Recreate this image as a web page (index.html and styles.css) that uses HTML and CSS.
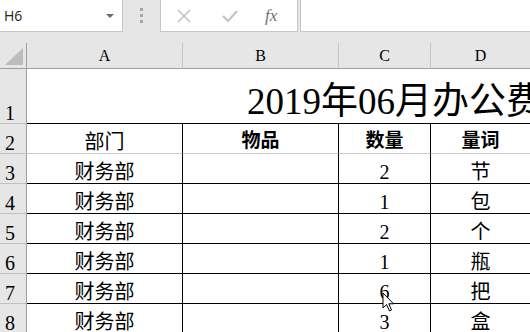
FILE: index.html
```html
<!DOCTYPE html>
<html lang="zh-cn">
	<head>
		<meta http-equiv="Content-Type" content="text/html; charset=utf-8" />
		<title>办公费用</title>
		<link rel="stylesheet" href="styles.css">
	</head>

	<body>
		<div class="toolbar">
			<div class="namebox">
				<span class="ref">H6</span>
				<span class="drop"></span>
			</div>
			<div class="grip">
				<i></i><i></i><i></i>
			</div>
			<div class="fxbox">
				<svg class="ico" width="16" height="16" viewBox="0 0 16 16">
					<path d="M2 2 L14 14 M14 2 L2 14" stroke="#c4c4c4" stroke-width="1.6" fill="none"/>
				</svg>
				<svg class="ico" width="18" height="16" viewBox="0 0 18 16">
					<path d="M2 8 L7 13 L16 3" stroke="#c4c4c4" stroke-width="2.2" fill="none"/>
				</svg>
				<span class="fx">fx</span>
			</div>
			<div class="formula"></div>
		</div>

		<table class="sheet">
			<colgroup>
				<col class="c-rh">
				<col class="c-wide">
				<col class="c-wide">
				<col class="c-num">
				<col class="c-unit">
				<col class="c-unit">
			</colgroup>
			<tr class="hdr">
				<td class="corner"><span class="tri"></span></td>
				<td class="ch">A</td>
				<td class="ch">B</td>
				<td class="ch">C</td>
				<td class="ch">D</td>
				<td class="ch">E</td>
			</tr>
			<tr class="r-title">
				<td class="rh">1</td>
				<td class="title" colspan="5">2019年06月办公费用明细表</td>
			</tr>
			<tr class="r-head">
				<td class="rh">2</td>
				<td class="cell">部门</td>
				<td class="cell bold">物品</td>
				<td class="cell bold">数量</td>
				<td class="cell bold">量词</td>
				<td class="cell"></td>
			</tr>
			<tr>
				<td class="rh">3</td>
				<td class="cell line">财务部</td>
				<td class="cell line"></td>
				<td class="cell line">2</td>
				<td class="cell line">节</td>
				<td class="cell"></td>
			</tr>
			<tr>
				<td class="rh">4</td>
				<td class="cell line">财务部</td>
				<td class="cell line"></td>
				<td class="cell line">1</td>
				<td class="cell line">包</td>
				<td class="cell"></td>
			</tr>
			<tr>
				<td class="rh">5</td>
				<td class="cell line">财务部</td>
				<td class="cell line"></td>
				<td class="cell line">2</td>
				<td class="cell line">个</td>
				<td class="cell"></td>
			</tr>
			<tr>
				<td class="rh">6</td>
				<td class="cell line">财务部</td>
				<td class="cell line"></td>
				<td class="cell line">1</td>
				<td class="cell line">瓶</td>
				<td class="cell"></td>
			</tr>
			<tr>
				<td class="rh">7</td>
				<td class="cell line">财务部</td>
				<td class="cell line"></td>
				<td class="cell line">6</td>
				<td class="cell line">把</td>
				<td class="cell"></td>
			</tr>
			<tr>
				<td class="rh">8</td>
				<td class="cell line">财务部</td>
				<td class="cell line"></td>
				<td class="cell line">3</td>
				<td class="cell line">盒</td>
				<td class="cell"></td>
			</tr>
		</table>

		<!-- 鼠标指针 -->
		<svg class="cursor" width="14" height="21" viewBox="0 0 14 21">
			<path d="M1 1 L1 16 L4.5 12.5 L7.5 19 L9.5 18 L6.8 11.8 L11.5 11.8 Z" fill="#fff" stroke="#000" stroke-width="1"/>
		</svg>
	</body>
</html>
```

FILE: styles.css
```css
*{
	box-sizing: border-box;
}
body{
	margin: 0;
	width: 530px;
	height: 332px;
	overflow: hidden;
	position: relative;
	background: #e6e6e6;
	font-family: "Liberation Serif", "Noto Sans CJK SC", serif;
	color: #000;
}
.toolbar{
	display: flex;
	height: 43px;
	background: #e6e6e6;
}
.namebox{
	width: 123px;
	height: 32px;
	background: #fff;
	border-right: 1px solid #c6c6c6;
	border-bottom: 1px solid #c6c6c6;
	display: flex;
	align-items: center;
	justify-content: space-between;
	padding: 0 8px 0 4px;
}
.namebox .ref{
	font-family: "Open Sans", "Liberation Sans", sans-serif;
	font-size: 14px;
	color: #222;
}
.namebox .drop{
	width: 0;
	height: 0;
	border-left: 4px solid transparent;
	border-right: 4px solid transparent;
	border-top: 4px solid #6b6b6b;
}
.grip{
	width: 37px;
	display: flex;
	flex-direction: column;
	align-items: center;
	padding-top: 8px;
	gap: 3px;
}
.grip i{
	display: block;
	width: 3px;
	height: 3px;
	background: #a6a6a6;
}
.fxbox{
	width: 138px;
	height: 32px;
	background: #fff;
	border-left: 1px solid #c6c6c6;
	border-right: 1px solid #c6c6c6;
	border-bottom: 1px solid #c6c6c6;
	display: flex;
	align-items: center;
	padding-left: 15px;
	gap: 29px;
}
.fx{
	font-family: "Liberation Serif", serif;
	font-style: italic;
	font-size: 17px;
	color: #6e6e6e;
	margin-left: -3px;
}
.formula{
	flex: 1;
	height: 32px;
	margin-left: 2px;
	background: #fff;
	border-left: 1px solid #c6c6c6;
	border-bottom: 1px solid #c6c6c6;
}

.sheet{
	table-layout: fixed;
	width: 631px;
	border-collapse: separate;
	border-spacing: 0;
	background: #fff;
}
.c-rh{ width: 27px; }
.c-wide{ width: 156px; }
.c-num{ width: 92px; }
.c-unit{ width: 100px; }
.sheet td{
	padding: 0;
	white-space: nowrap;
	overflow: hidden;
	vertical-align: bottom;
	border-right: 1px solid #c8c8c8;
	border-bottom: 1px solid #c8c8c8;
	text-align: center;
	font-size: 20px;
	line-height: 22px;
}
.hdr td{
	height: 26px;
	background: #e6e6e6;
	border-right-color: #c6c6c6;
	border-bottom-color: #9e9e9e;
	font-size: 16px;
	line-height: 18px;
	padding-bottom: 3px;
}
.sheet td.corner{
	position: relative;
	border-right-color: #9e9e9e;
}
.tri{
	position: absolute;
	left: 5px;
	top: 5px;
	width: 0;
	height: 0;
	border-left: 18px solid transparent;
	border-bottom: 17px solid #bcbcbc;
}
.sheet td.rh{
	background: #e6e6e6;
	text-align: left;
	padding-left: 5px;
	border-right-color: #9e9e9e;
	border-bottom-color: #c0c0c0;
	line-height: 20px;
}
.r-title td{
	height: 55px;
}
.sheet td.title{
	text-align: left;
	padding-left: 220px;
	font-size: 37px;
	line-height: 40px;
	padding-bottom: 1px;
	border-right: none;
	border-bottom-color: #000;
}
.r-head td, .sheet tr td.cell{
	height: 30px;
}
.r-head td.cell{
	border-right-color: #000;
}
.sheet td.bold{
	font-family: "Noto Sans CJK SC", sans-serif;
	font-weight: bold;
	font-size: 19px;
	padding-bottom: 3px;
}
.sheet td.line{
	border-right-color: #000;
	border-bottom-color: #000;
}
.cursor{
	position: absolute;
	left: 382px;
	top: 292px;
}
```
